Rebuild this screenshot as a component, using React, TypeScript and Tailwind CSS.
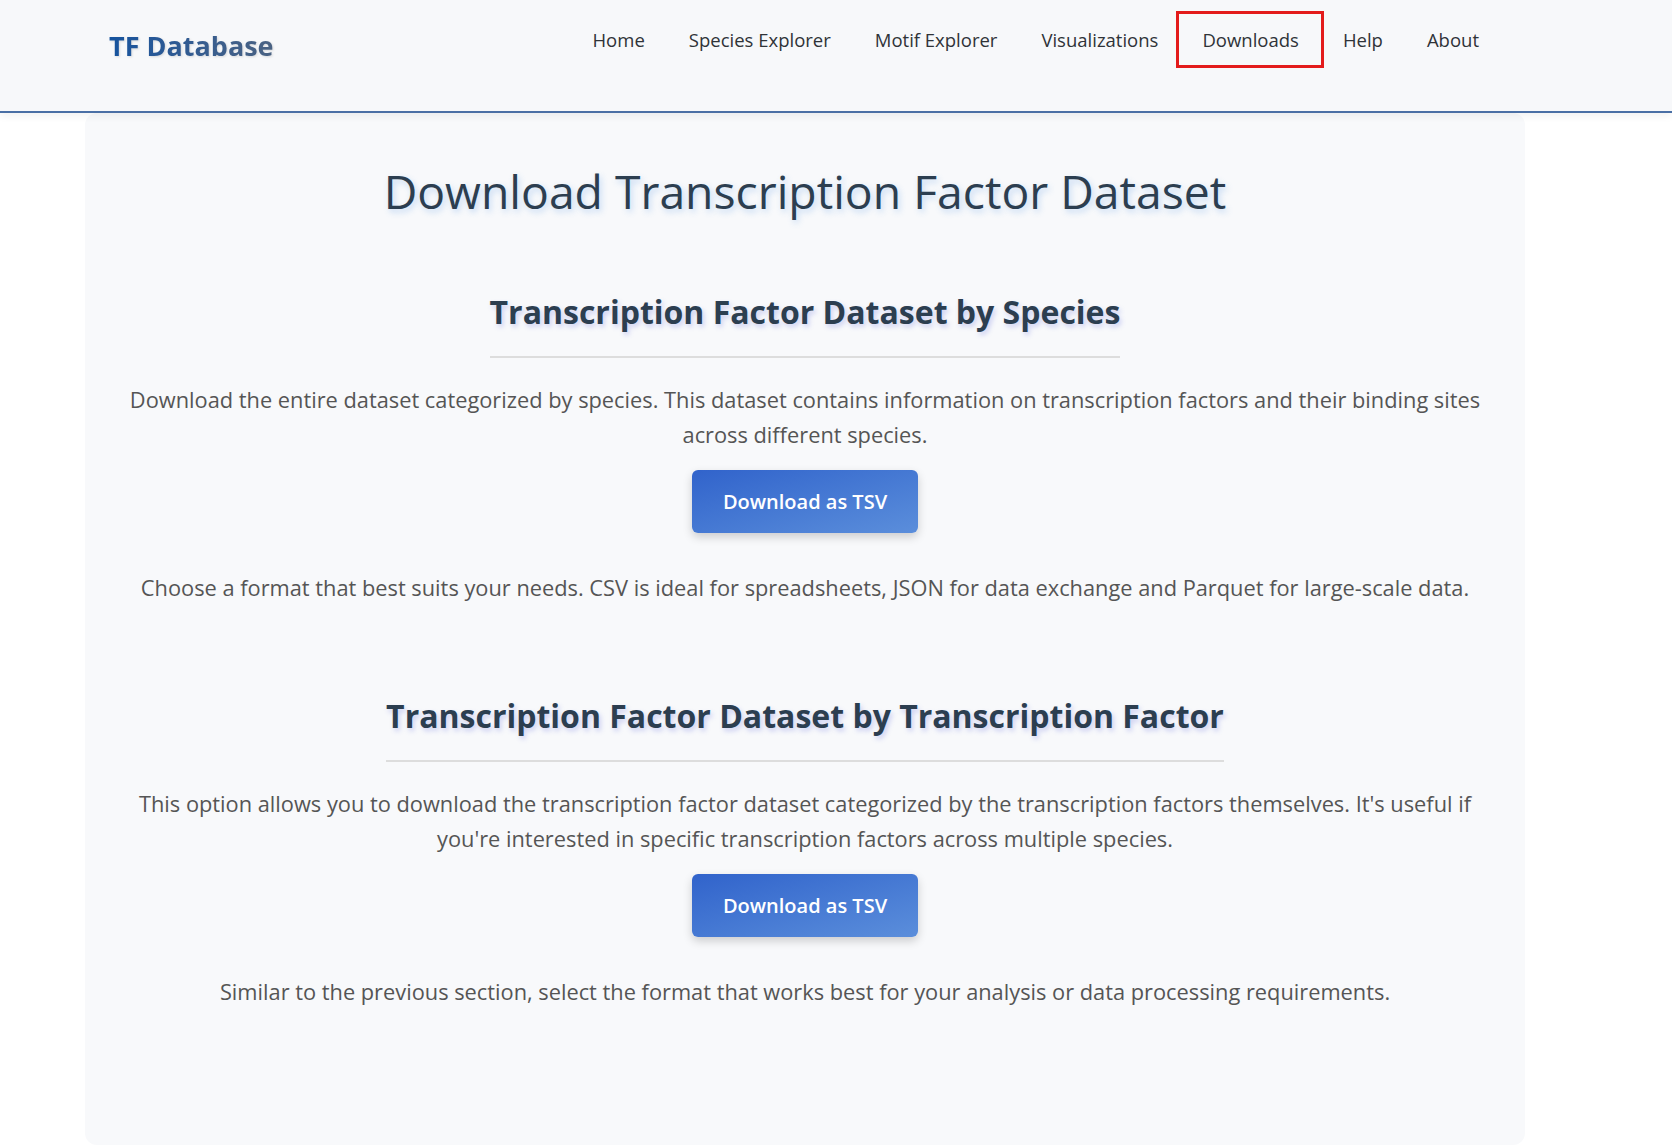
import React from 'react';

const navItems = ['Home', 'Species Explorer', 'Motif Explorer', 'Visualizations', 'Downloads', 'Help', 'About'];

function DownloadSection({ title, text, note }: { title: string; text: string; note: string }) {
  return (
    <section className="flex flex-col items-center">
      <h2 className="inline-block border-b-2 border-[#dddddd] pb-[22px] text-[32px] font-bold leading-[44px] text-[#2c3e50] [text-shadow:2px_3px_5px_rgba(90,100,220,0.28)]">
        {title}
      </h2>
      <p className="mt-[24px] text-center text-[21.8px] leading-[35px] text-[#555555]">{text}</p>
      <button
        type="button"
        className="mt-[18px] h-[63px] w-[226px] rounded-md bg-gradient-to-br from-[#3163cb] to-[#5b8edb] text-[20px] font-semibold text-white shadow-[0_4px_10px_rgba(0,0,0,0.18)]"
      >
        Download as TSV
      </button>
      <p className="mt-[37px] text-center text-[21.8px] leading-[35px] text-[#555555]">{note}</p>
    </section>
  );
}

export default function App() {
  return (
    <div className="min-h-screen bg-white" style={{ fontFamily: '"Open Sans", "Noto Sans", sans-serif' }}>
      {/* Header */}
      <header className="relative z-10 h-[113px] border-b-2 border-[#4a6fa5] bg-[#f7f8fa] shadow-[0_3px_8px_rgba(0,0,0,0.06)]">
        <div className="flex h-full items-start pl-[109px] pr-[193px]">
          <div className="mt-[27px] bg-gradient-to-r from-[#14539e] to-[#4a6282] bg-clip-text text-[27px] font-bold leading-[38px] text-transparent [filter:drop-shadow(1px_1px_1px_rgba(0,0,0,0.12))]">
            TF Database
          </div>
          <nav className="ml-auto mt-[26px] flex gap-[44px]">
            {navItems.map((item) => (
              <a key={item} href="#" className="relative text-[18.5px] leading-[28px] text-[#2f3338]">
                {item}
                {item === 'Downloads' && (
                  <span className="absolute -top-[15px] -bottom-[14px] -left-[26px] -right-[25px] border-[3px] border-[#e31b1b]" />
                )}
              </a>
            ))}
          </nav>
        </div>
      </header>

      {/* Main card */}
      <main className="ml-[85px] w-[1440px] h-[1032px] rounded-xl bg-[#f8f9fb] px-[40px] pt-[50px]">
        <h1 className="text-center text-[46.3px] font-medium leading-[58px] text-[#2c3e50] [text-shadow:2px_3px_6px_rgba(74,144,226,0.3)]">
          Download Transcription Factor Dataset
        </h1>

        <div className="mt-[69px]">
          <DownloadSection
            title="Transcription Factor Dataset by Species"
            text="Download the entire dataset categorized by species. This dataset contains information on transcription factors and their binding sites across different species."
            note="Choose a format that best suits your needs. CSV is ideal for spreadsheets, JSON for data exchange and Parquet for large-scale data."
          />
        </div>

        <div className="mt-[89px]">
          <DownloadSection
            title="Transcription Factor Dataset by Transcription Factor"
            text="This option allows you to download the transcription factor dataset categorized by the transcription factors themselves. It's useful if you're interested in specific transcription factors across multiple species."
            note="Similar to the previous section, select the format that works best for your analysis or data processing requirements."
          />
        </div>
      </main>
    </div>
  );
}
